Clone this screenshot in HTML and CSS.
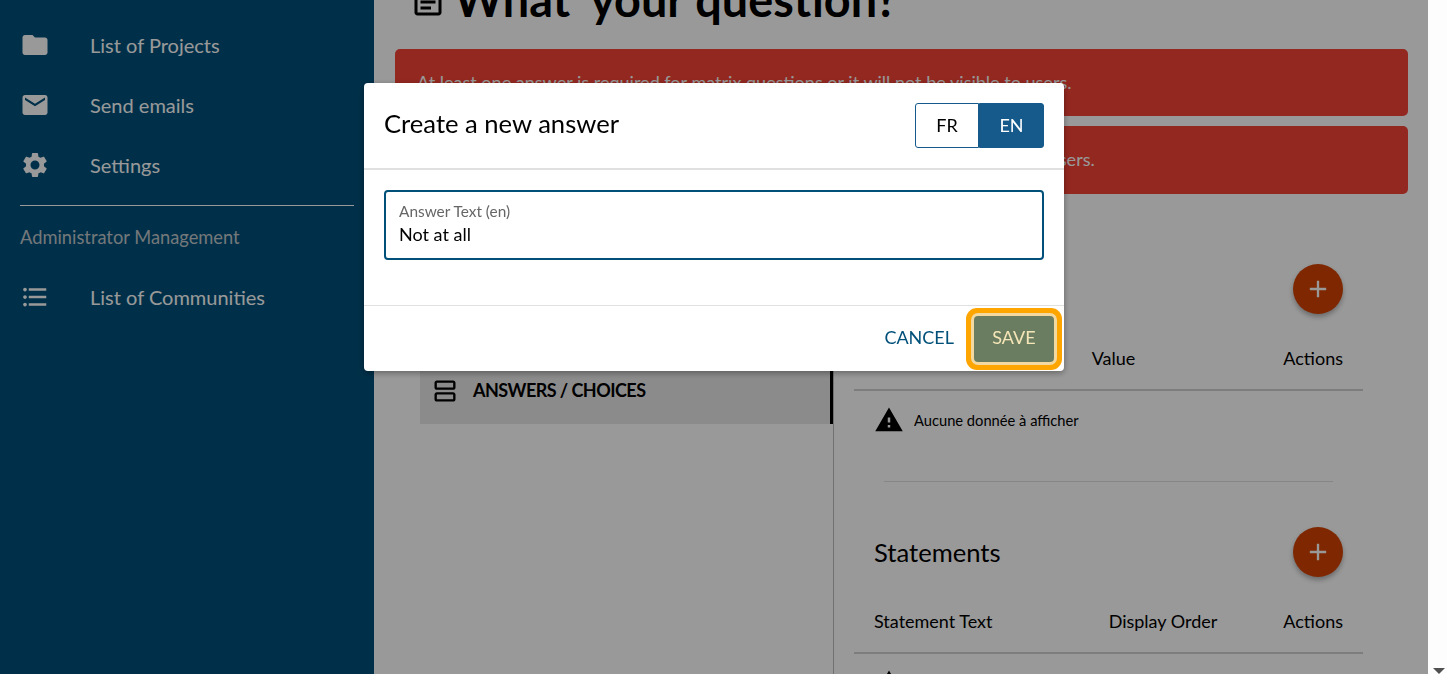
FILE: index.html
```html
<!DOCTYPE html>
<html lang="en">
<head>
<meta charset="utf-8">
<title>Create a new answer</title>
<link rel="stylesheet" href="styles.css">
</head>
<body>
<div class="page">
  <aside class="sidebar">
    <nav class="nav">
      <a class="nav-item"><svg class="nav-icon" viewBox="0 0 24 24"><path d="M10 4H4c-1.1 0-2 .9-2 2v12c0 1.1.9 2 2 2h16c1.1 0 2-.9 2-2V8c0-1.1-.9-2-2-2h-8l-2-2z"/></svg><span>List of Projects</span></a>
      <a class="nav-item"><svg class="nav-icon" viewBox="0 0 24 24"><path d="M20 4H4c-1.1 0-2 .9-2 2v12c0 1.1.9 2 2 2h16c1.1 0 2-.9 2-2V6c0-1.1-.9-2-2-2zm0 4-8 5-8-5V6l8 5 8-5v2z"/></svg><span>Send emails</span></a>
      <a class="nav-item"><svg class="nav-icon" viewBox="0 0 24 24"><path d="M19.14 12.94c.04-.3.06-.61.06-.94s-.02-.64-.07-.94l2.03-1.58a.49.49 0 0 0 .12-.61l-1.92-3.32a.49.49 0 0 0-.59-.22l-2.39.96a7 7 0 0 0-1.62-.94l-.36-2.54a.48.48 0 0 0-.48-.41h-3.84a.48.48 0 0 0-.47.41l-.36 2.54c-.59.24-1.13.57-1.62.94l-2.39-.96a.48.48 0 0 0-.59.22L2.74 8.87a.48.48 0 0 0 .12.61l2.03 1.58c-.05.3-.09.63-.09.94s.02.64.07.94l-2.03 1.58a.49.49 0 0 0-.12.61l1.92 3.32c.12.22.37.29.59.22l2.39-.96c.5.38 1.03.7 1.62.94l.36 2.54c.05.24.24.41.48.41h3.84c.24 0 .44-.17.47-.41l.36-2.54c.59-.24 1.13-.56 1.62-.94l2.39.96c.22.08.47 0 .59-.22l1.92-3.32a.48.48 0 0 0-.12-.61l-2.01-1.58zM12 15.6a3.6 3.6 0 1 1 0-7.2 3.6 3.6 0 0 1 0 7.2z"/></svg><span>Settings</span></a>
    </nav>
    <hr class="nav-rule">
    <div class="nav-heading">Administrator Management</div>
    <nav class="nav">
      <a class="nav-item"><svg class="nav-icon" viewBox="0 0 24 24"><path d="M4 10.5c-.83 0-1.5.67-1.5 1.5s.67 1.5 1.5 1.5 1.5-.67 1.5-1.5-.67-1.5-1.5-1.5zm0-6c-.83 0-1.5.67-1.5 1.5S3.17 7.5 4 7.5 5.500 6.830 5.500 6 4.830 4.500 4 4.500zm0 12c-.83 0-1.5.68-1.5 1.500s.68 1.500 1.500 1.500 1.500-.68 1.500-1.500-.67-1.500-1.500-1.500zM7 19h14v-2H7v2zm0-6h14v-2H7v2zm0-8v2h14V5H7z"/></svg><span>List of Communities</span></a>
    </nav>
  </aside>

  <main class="main">
    <h1 class="title"><svg class="title-icon" viewBox="0 0 24 24"><path d="M19 5v14H5V5h14m0-2H5c-1.100 0-2 .9-2 2v14c0 1.100.9 2 2 2h14c1.100 0 2-.9 2-2V5c0-1.100-.9-2-2-2zM7 7h10v2H7V7zm0 4h10v2H7v-2zm0 4h7v2H7v-2z"/></svg>What' your question?</h1>
    <div class="alert alert-first">At least one answer is required for matrix questions or it will not be visible to users.</div>
    <div class="alert alert-second">At least one statement is required for matrix questions or it will not be visible to users.</div>
    <div class="columns">
      <section class="tabs">
        <div class="tab-active"><svg class="tab-icon" viewBox="0 0 24 24"><path d="M19 13H5c-1.100 0-2 .9-2 2v4c0 1.100.9 2 2 2h14c1.100 0 2-.9 2-2v-4c0-1.100-.9-2-2-2zm0 6H5v-4h14v4zM19 3H5c-1.100 0-2 .9-2 2v4c0 1.100.9 2 2 2h14c1.100 0 2-.9 2-2V5c0-1.100-.9-2-2-2zm0 6H5V5h14v4z"/></svg><span>ANSWERS / CHOICES</span></div>
      </section>
      <section class="panel">
        <div class="panel-head panel-head-first">
          <h2 class="panel-title">Answers</h2>
          <button class="fab" type="button"><svg viewBox="0 0 24 24"><path d="M19 13h-6v6h-2v-6H5v-2h6V5h2v6h6v2z"/></svg></button>
        </div>
        <div class="table-head">
          <span class="col-text">Answer Text</span><span class="col-value">Value</span><span class="col-actions">Actions</span>
        </div>
        <div class="empty"><svg class="warn" viewBox="0 0 24 24"><path d="M1 21h22L12 2 1 21zm12-3h-2v-2h2v2zm0-4h-2v-4h2v4z"/></svg><span>Aucune donnée à afficher</span></div>
        <hr class="panel-rule">
        <div class="panel-head">
          <h2 class="panel-title">Statements</h2>
          <button class="fab" type="button"><svg viewBox="0 0 24 24"><path d="M19 13h-6v6h-2v-6H5v-2h6V5h2v6h6v2z"/></svg></button>
        </div>
        <div class="table-head">
          <span class="col-text">Statement Text</span><span class="col-order">Display Order</span><span class="col-actions">Actions</span>
        </div>
        <div class="empty"><svg class="warn" viewBox="0 0 24 24"><path d="M1 21h22L12 2 1 21zm12-3h-2v-2h2v2zm0-4h-2v-4h2v4z"/></svg><span>Aucune donnée à afficher</span></div>
      </section>
    </div>
  </main>
  <div class="scrollbar"><span class="scroll-arrow"></span></div>
</div>

<div class="backdrop"></div>

<div class="modal" role="dialog">
  <header class="modal-head">
    <h2 class="modal-title">Create a new answer</h2>
    <div class="lang">
      <button class="lang-btn lang-off" type="button">FR</button>
      <button class="lang-btn lang-on" type="button">EN</button>
    </div>
  </header>
  <div class="modal-body">
    <div class="field">
      <label class="field-label">Answer Text (en)</label>
      <div class="field-value">Not at all</div>
    </div>
  </div>
  <footer class="modal-foot">
    <button class="btn-cancel" type="button">CANCEL</button>
    <button class="btn-save" type="button">SAVE</button>
  </footer>
</div>
</body>
</html>
```

FILE: styles.css
```css
* { box-sizing: border-box; }
html, body { margin: 0; height: 100%; overflow: hidden; }
body { font-family: Lato, "Liberation Sans", sans-serif; color: #000; background: #fff; }

.page { display: flex; height: 674px; overflow: hidden; }

/* sidebar */
.sidebar { width: 374px; flex: none; background: #00507a; padding: 15px 20px 0; color: #fff; }
.nav { display: flex; flex-direction: column; }
.nav-item { display: flex; align-items: center; height: 60px; font-size: 20px; color: #fff; }
.nav-icon { width: 30px; height: 30px; fill: #fff; margin-right: 40px; flex: none; }
.nav-rule { border: 0; border-top: 1px solid #fff; margin: 10px 0 0; width: 334px; }
.nav-heading { font-size: 18.3px; color: #c2c8cc; margin: 21px 0 20px; line-height: 20px; white-space: nowrap; }

/* main */
.main { width: 1054px; flex: none; background: #fff; padding: 0 20px; border-left: 1px solid #fff; }
.title { display: flex; align-items: center; margin: -32px 0 0 15px; height: 63px; font-size: 46.8px; font-weight: 700; line-height: 63px; white-space: nowrap; }
.title-icon { width: 36px; height: 36px; fill: #000; margin: 5px 8px 0 0; flex: none; }
.alert { width: 1013px; background: #f44336; color: #fff; border-radius: 5px; font-size: 18.05px; padding: 0 22px 2px; display: flex; align-items: center; white-space: nowrap; }
.alert-first { height: 67px; margin-top: 18px; }
.alert-second { height: 68px; margin-top: 10px; }

.columns { display: flex; margin-left: 25px; height: 600px; }
.tabs { width: 413px; flex: none; padding-top: 166px; }
.tab-active { height: 64px; width: 413px; background: #e8e8e8; border-right: 3px solid #000; display: flex; align-items: flex-start; padding: 17px 0 0 11px; font-size: 18px; letter-spacing: -.55px; font-weight: 700; line-height: 20px; }
.tab-icon { width: 28px; height: 28px; fill: #000; margin-right: 14px; flex: none; }
.tab-active span { padding-top: 3px; }
.panel { width: 530px; flex: none; border-left: 1px solid #bdbdbd; padding: 0 0 0 20px; }
.panel-head { display: flex; align-items: center; justify-content: space-between; height: 50px; padding: 0 20px; margin-top: 45px; width: 509px; }
.panel-head-first { margin-top: 70px; }
.panel-title { margin: 0; font-size: 25.6px; font-weight: 400; }
.fab { width: 50px; height: 50px; border-radius: 50%; border: 0; background: #d34200; padding: 11px; box-shadow: 0 3px 5px rgba(0,0,0,.3); }
.fab svg { width: 28px; height: 28px; fill: #fff; display: block; }
.table-head { width: 509px; height: 57px; margin-top: 20px; padding: 0 20px 7px; border-bottom: 2px solid #d0d0d0; display: flex; align-items: center; font-size: 18px; }
.col-text { width: 218px; }
.col-value { width: 192px; }
.col-order { width: 175px; margin-left: 17px; }
.empty { display: flex; align-items: center; height: 58px; padding-left: 20px; font-size: 14.7px; }
.warn { width: 30px; height: 30px; fill: #000; margin-right: 10px; flex: none; }
.panel-rule { width: 449px; border: 0; border-top: 1px solid #e0e0e0; margin: 32px 0 0 30px; }

/* scrollbar */
.scrollbar { flex: 1; background: #fdfdfd; position: relative; }
.scroll-arrow { position: absolute; left: 5px; bottom: 0; width: 0; height: 0; border: 6px solid transparent; border-top: 6px solid #505050; border-bottom: 0; }

/* modal layer */
.backdrop { position: fixed; left: 0; top: 0; width: 1428px; height: 674px; background: rgba(0,0,0,.4); }
.modal { position: fixed; left: 364px; top: 83px; width: 700px; height: 288px; background: #fff; border-radius: 4px; box-shadow: 0 2px 6px rgba(0,0,0,.35); display: flex; flex-direction: column; }
.modal-head { height: 87px; border-bottom: 2px solid #e0e0e0; display: flex; align-items: center; justify-content: space-between; padding: 0 20px; flex: none; }
.modal-title { margin: 0 0 5px; font-size: 25.6px; font-weight: 400; }
.lang { display: flex; height: 45px; }
.lang-btn { border: 1px solid #155a8a; font: 400 18px Lato, sans-serif; padding: 0 0 2px; }
.lang-off { width: 64px; background: #fff; color: #000; border-radius: 3px 0 0 3px; }
.lang-on { width: 65px; background: #155a8a; color: #fff; border-radius: 0 3px 3px 0; }
.modal-body { flex: 1; padding: 20px 20px 0; }
.field { height: 70px; border: 2px solid #00507a; border-radius: 4px; padding: 11px 13px 0; }
.field-label { display: block; font-size: 15.4px; line-height: 17px; color: #666; }
.field-value { font-size: 18px; line-height: 24px; margin-top: 2px; }
.modal-foot { height: 66px; border-top: 1px solid #e0e0e0; display: flex; align-items: center; justify-content: flex-end; padding: 0 10px 0 0; flex: none; }
.btn-cancel { border: 0; background: none; font: 400 18px Lato, sans-serif; color: #00507a; margin-right: 20px; padding: 0 0 4px; }
.btn-save { width: 80px; height: 46px; background: #6b7d60; color: #f5e6b8; border: 0; border-radius: 4px; font: 400 18px Lato, sans-serif; box-shadow: 0 0 0 3px #f3d9a0, 0 0 0 8px #ffa500; padding: 0 0 4px; }
```
